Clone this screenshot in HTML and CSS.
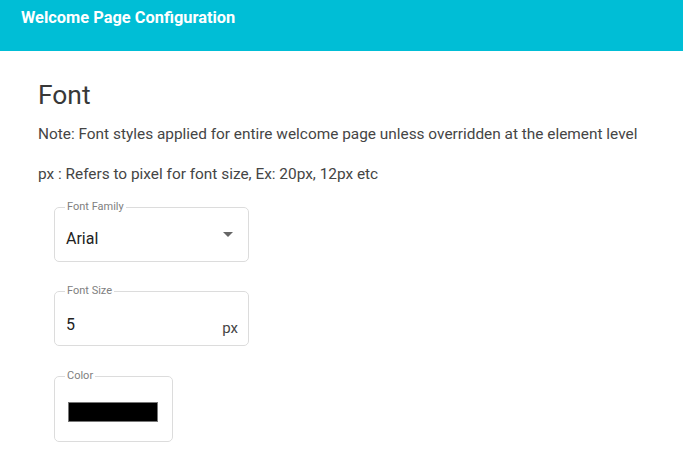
FILE: index.html
```html
<!DOCTYPE html>
<html>
<head>
<meta charset="utf-8">
<link rel="stylesheet" href="styles.css">
</head>
<body>
<header class="topbar">
  <div class="topbar-title">Welcome Page Configuration</div>
</header>
<main class="content">
  <h1 class="section-title">Font</h1>
  <p class="note">Note: Font styles applied for entire welcome page unless overridden at the element level</p>
  <p class="note">px : Refers to pixel for font size, Ex: 20px, 12px etc</p>
  <div class="fields">
    <fieldset class="field field-wide">
      <legend>Font Family</legend>
      <div class="field-row">
        <span class="value value-select">Arial</span>
        <span class="arrow"></span>
      </div>
    </fieldset>
    <fieldset class="field field-wide">
      <legend>Font Size</legend>
      <div class="field-row">
        <span class="value value-input">5</span>
        <span class="suffix">px</span>
      </div>
    </fieldset>
    <fieldset class="field field-color">
      <legend>Color</legend>
      <div class="swatch"></div>
    </fieldset>
  </div>
</main>
</body>
</html>
```
FILE: styles.css
```css
* { box-sizing: border-box; }
body {
  margin: 0;
  font-family: Roboto, "Liberation Sans", Arial, sans-serif;
  background: #fff;
}
.topbar {
  height: 51px;
  background: #00bed6;
  padding: 8px 0 0 21px;
}
.topbar-title {
  color: #fff;
  font-weight: 700;
  font-size: 16.4px;
  line-height: 20px;
}
.content {
  padding: 0 0 0 38px;
}
.section-title {
  margin: 28px 0 0 0;
  font-size: 26.4px;
  font-weight: 400;
  line-height: 32px;
  color: #383838;
}
.note {
  margin: 7px 0 0 0;
  font-size: 15.4px;
  line-height: 32px;
  color: #454545;
}
.note + .note { margin-top: 8px; }
.fields {
  display: flex;
  flex-direction: column;
  align-items: flex-start;
  gap: 23px;
  padding-left: 16px;
  margin-top: 11px;
}
.field {
  margin: 0;
  border: 1px solid #dcdcdc;
  border-radius: 5px;
  padding: 0 11px;
  min-width: 0;
}
.field legend {
  font-size: 11px;
  color: #808080;
  padding: 0 2px;
  margin-left: -1px;
  line-height: 12px;
}
.field-wide {
  width: 195px;
  height: 61px;
}
.field-row {
  display: flex;
  align-items: center;
  justify-content: space-between;
  height: 48px;
}
.value {
  font-size: 16px;
  color: #222;
}
.value-select { margin-top: 2px; }
.value-input { margin-top: 6px; }
.arrow {
  width: 0;
  height: 0;
  border-left: 5px solid transparent;
  border-right: 5px solid transparent;
  border-top: 5px solid #666;
  margin-right: 4px;
  margin-top: -6px;
}
.suffix {
  font-size: 15px;
  color: #444;
  margin-top: 14px;
  margin-right: -1px;
}
.field-color {
  width: 119px;
  height: 72px;
  margin-top: 1px;
}
.swatch {
  margin: 20px 0 0 2px;
  width: 90px;
  height: 20px;
  background: #000;
  border: 1px solid #777;
}
```
